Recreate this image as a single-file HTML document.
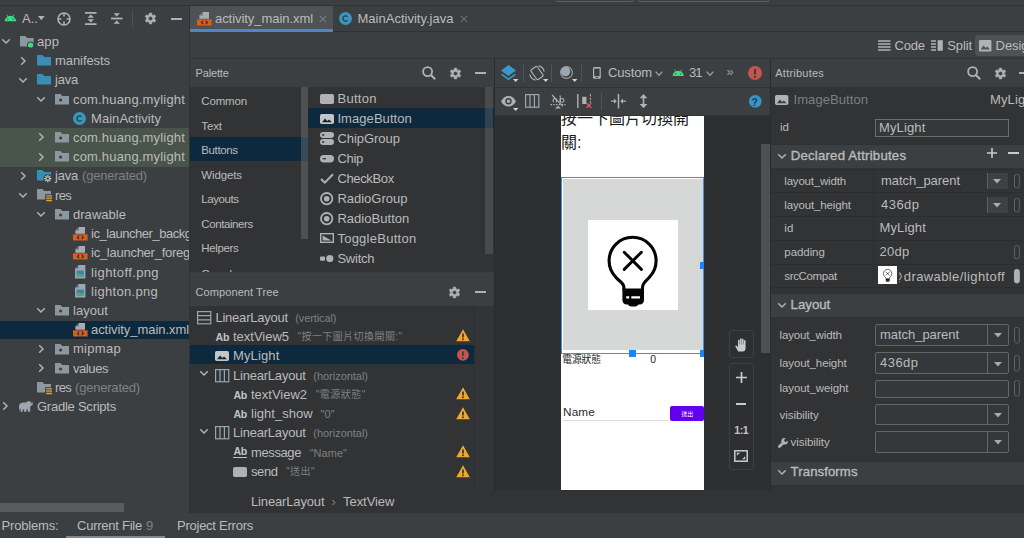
<!DOCTYPE html>
<html><head><meta charset="utf-8"><title>Android Studio</title><style>
html,body{margin:0;padding:0;}
body{width:1024px;height:538px;overflow:hidden;background:#3c3f41;position:relative;font-family:"Liberation Sans", "Noto Sans CJK TC", sans-serif;}
.b{position:absolute;}
.t{position:absolute;white-space:pre;line-height:20px;height:20px;}
svg{position:absolute;overflow:visible;}
</style></head>
<body>
<div class="b" style="left:0px;top:0px;width:1024px;height:5px;background:#3c3f41;"></div>
<div class="b" style="left:556px;top:0px;width:77px;height:2px;background:transparent;border:1px solid #5e6163;border-top:none;border-radius:0 0 3px 3px;box-sizing:border-box;"></div>
<div class="b" style="left:638px;top:0px;width:131px;height:2px;background:transparent;border:1px solid #5e6163;border-top:none;border-radius:0 0 3px 3px;box-sizing:border-box;"></div>
<div class="b" style="left:0px;top:5px;width:1024px;height:1px;background:#323232;"></div>
<div class="b" style="left:0px;top:6px;width:189px;height:507px;background:#3c3f41;"></div>
<div class="b" style="left:189px;top:6px;width:1px;height:507px;background:#323232;"></div>
<span class="t" style="left:22px;top:8.5px;font-size:13px;color:#bbbbbb;letter-spacing:0.031px;">A..</span>
<div class="b" style="left:0px;top:127.8px;width:189px;height:39.0px;background:#49544a;"></div>
<div class="b" style="left:0px;top:321px;width:189px;height:18.4px;background:#0d293e;"></div>
<span class="t" style="left:37px;top:31.91px;font-size:13px;color:#bbbbbb;letter-spacing:0.099px;">app</span>
<span class="t" style="left:55px;top:51.13px;font-size:13px;color:#bbbbbb;letter-spacing:-0.071px;">manifests</span>
<span class="t" style="left:55px;top:70.35px;font-size:13px;color:#bbbbbb;letter-spacing:-0.215px;">java</span>
<span class="t" style="left:73px;top:89.57px;font-size:13px;color:#bbbbbb;letter-spacing:0.169px;">com.huang.mylight</span>
<span class="t" style="left:91px;top:108.79px;font-size:13px;color:#bbbbbb;letter-spacing:0.053px;">MainActivity</span>
<span class="t" style="left:73px;top:128.01px;font-size:13px;color:#bbbbbb;letter-spacing:0.169px;">com.huang.mylight</span>
<span class="t" style="left:73px;top:147.23px;font-size:13px;color:#bbbbbb;letter-spacing:0.169px;">com.huang.mylight</span>
<span class="t" style="left:55px;top:166.45px;font-size:13px;color:#bbbbbb;letter-spacing:-0.215px;">java</span>
<span class="t" style="left:55px;top:185.67px;font-size:13px;color:#bbbbbb;letter-spacing:-0.688px;">res</span>
<span class="t" style="left:73px;top:204.89px;font-size:13px;color:#bbbbbb;letter-spacing:0.029px;">drawable</span>
<span class="t" style="left:91px;top:224.11px;font-size:13px;color:#bbbbbb;letter-spacing:-0.465px;width:98px;overflow:hidden;">ic_launcher_background.xml</span>
<span class="t" style="left:91px;top:243.33px;font-size:13px;color:#bbbbbb;letter-spacing:-0.256px;width:98px;overflow:hidden;">ic_launcher_foreground.xml</span>
<span class="t" style="left:91px;top:262.55px;font-size:13px;color:#bbbbbb;letter-spacing:0.385px;">lightoff.png</span>
<span class="t" style="left:91px;top:281.77px;font-size:13px;color:#bbbbbb;letter-spacing:0.307px;">lighton.png</span>
<span class="t" style="left:73px;top:300.99px;font-size:13px;color:#bbbbbb;letter-spacing:0.049px;">layout</span>
<span class="t" style="left:91px;top:320.21px;font-size:13px;color:#bbbbbb;letter-spacing:-0.057px;">activity_main.xml</span>
<span class="t" style="left:73px;top:339.43px;font-size:13px;color:#bbbbbb;letter-spacing:0.292px;">mipmap</span>
<span class="t" style="left:73px;top:358.65px;font-size:13px;color:#bbbbbb;letter-spacing:-0.43px;">values</span>
<span class="t" style="left:55px;top:377.87px;font-size:13px;color:#bbbbbb;letter-spacing:-0.688px;">res</span>
<span class="t" style="left:37px;top:397.09px;font-size:13px;color:#bbbbbb;letter-spacing:-0.241px;">Gradle Scripts</span>
<span class="t" style="left:82px;top:166.45px;font-size:13px;color:#7f8183;letter-spacing:-0.202px;">(generated)</span>
<span class="t" style="left:75px;top:377.87px;font-size:13px;color:#7f8183;letter-spacing:-0.202px;">(generated)</span>
<div class="b" style="left:0px;top:503.3px;width:124.4px;height:8.5px;background:#595b5d;"></div>
<div class="b" style="left:190px;top:6px;width:834px;height:25px;background:#3c3f41;"></div>
<div class="b" style="left:190px;top:6px;width:143px;height:25.7px;background:#4e5254;"></div>
<span class="t" style="left:215px;top:9.3px;font-size:13px;color:#bbbbbb;letter-spacing:-0.057px;">activity_main.xml</span>
<span class="t" style="left:357.5px;top:9.3px;font-size:13px;color:#bbbbbb;letter-spacing:0.009px;">MainActivity.java</span>
<div class="b" style="left:190px;top:30.9px;width:834px;height:1.1px;background:#2f3133;"></div>
<div class="b" style="left:190px;top:28.7px;width:143px;height:3.3px;background:#4a88c7;"></div>
<div class="b" style="left:190px;top:32px;width:834px;height:26px;background:#3c3f41;"></div>
<div class="b" style="left:975px;top:35px;width:60px;height:21px;background:#4e5254;border-radius:4px;"></div>
<span class="t" style="left:894.6px;top:35.9px;font-size:13px;color:#bbbbbb;letter-spacing:-0.27px;">Code</span>
<span class="t" style="left:947.3px;top:35.9px;font-size:13px;color:#bbbbbb;letter-spacing:-0.139px;">Split</span>
<span class="t" style="left:995.6px;top:35.9px;font-size:13px;color:#bbbbbb;letter-spacing:-0.078px;">Design</span>
<div class="b" style="left:190px;top:58px;width:834px;height:1px;background:#323232;"></div>
<div class="b" style="left:190px;top:59px;width:304px;height:28px;background:#3c3f41;"></div>
<span class="t" style="left:195.6px;top:63.0px;font-size:11px;color:#bbbbbb;letter-spacing:-0.179px;">Palette</span>
<div class="b" style="left:190px;top:87px;width:118px;height:184.8px;background:#313335;"></div>
<div class="b" style="left:308px;top:87px;width:186px;height:184.8px;background:#313335;"></div>
<div class="b" style="left:190px;top:136.5px;width:118px;height:24.5px;background:#0d293e;"></div>
<div class="b" style="left:308px;top:108.2px;width:186px;height:20px;background:#0d293e;"></div>
<span class="t" style="left:201.3px;top:91.0px;font-size:11.5px;color:#bbbbbb;letter-spacing:-0.159px;">Common</span>
<span class="t" style="left:201.3px;top:115.55px;font-size:11.5px;color:#bbbbbb;letter-spacing:-0.123px;">Text</span>
<span class="t" style="left:201.3px;top:140.1px;font-size:11.5px;color:#bbbbbb;letter-spacing:-0.371px;">Buttons</span>
<span class="t" style="left:201.3px;top:164.65px;font-size:11.5px;color:#bbbbbb;letter-spacing:-0.121px;">Widgets</span>
<span class="t" style="left:201.3px;top:189.2px;font-size:11.5px;color:#bbbbbb;letter-spacing:-0.412px;">Layouts</span>
<span class="t" style="left:201.3px;top:213.75px;font-size:11.5px;color:#bbbbbb;letter-spacing:-0.412px;">Containers</span>
<span class="t" style="left:201.3px;top:238.3px;font-size:11.5px;color:#bbbbbb;letter-spacing:-0.377px;">Helpers</span>
<div class="b" style="left:190px;top:262px;width:111px;height:10px;overflow:hidden;"><span class="t" style="left:11.3px;top:1.6px;font-size:11.5px;color:#bbbbbb;">Google</span></div>
<span class="t" style="left:337.4px;top:88.5px;font-size:13px;color:#bbbbbb;letter-spacing:0.318px;">Button</span>
<span class="t" style="left:337.4px;top:108.53px;font-size:13px;color:#bbbbbb;letter-spacing:0.071px;">ImageButton</span>
<span class="t" style="left:337.4px;top:128.56px;font-size:13px;color:#bbbbbb;letter-spacing:-0.042px;">ChipGroup</span>
<span class="t" style="left:337.4px;top:148.59px;font-size:13px;color:#bbbbbb;letter-spacing:-0.312px;">Chip</span>
<span class="t" style="left:337.4px;top:168.62px;font-size:13px;color:#bbbbbb;letter-spacing:-0.344px;">CheckBox</span>
<span class="t" style="left:337.4px;top:188.65px;font-size:13px;color:#bbbbbb;letter-spacing:-0.011px;">RadioGroup</span>
<span class="t" style="left:337.4px;top:208.68px;font-size:13px;color:#bbbbbb;letter-spacing:0.04px;">RadioButton</span>
<span class="t" style="left:337.4px;top:228.71px;font-size:13px;color:#bbbbbb;letter-spacing:0.258px;">ToggleButton</span>
<span class="t" style="left:337.4px;top:248.74px;font-size:13px;color:#bbbbbb;letter-spacing:-0.216px;">Switch</span>
<div class="b" style="left:301px;top:87px;width:7px;height:151.5px;background:rgba(128,130,132,0.38);"></div>
<div class="b" style="left:485px;top:87px;width:8px;height:167px;background:rgba(128,130,132,0.30);"></div>
<div class="b" style="left:493.5px;top:59px;width:1px;height:454px;background:#2b2b2b;"></div>
<div class="b" style="left:190px;top:271.8px;width:304px;height:34.4px;background:#3c3f41;"></div>
<div class="b" style="left:190px;top:277.2px;width:304px;height:1px;background:#383b3d;"></div>
<span class="t" style="left:195.6px;top:282.3px;font-size:11px;color:#bbbbbb;letter-spacing:0.076px;">Component Tree</span>
<div class="b" style="left:190px;top:306px;width:284px;height:184.5px;background:#313335;"></div>
<div class="b" style="left:474px;top:306px;width:19.5px;height:184.5px;background:#323437;"></div>
<div class="b" style="left:474px;top:306px;width:1px;height:184.5px;background:#2c2e30;"></div>
<div class="b" style="left:190px;top:345.4px;width:284px;height:18.6px;background:#0d293e;"></div>
<span class="t" style="left:215.4px;top:307.6px;font-size:13px;color:#bbbbbb;letter-spacing:-0.214px;">LinearLayout</span>
<span class="t" style="left:295.3px;top:307.6px;font-size:11px;color:#7f8183;letter-spacing:-0.117px;">(vertical)</span>
<span class="t" style="left:233px;top:326.9px;font-size:13px;color:#bbbbbb;letter-spacing:-0.016px;">textView5</span>
<span class="t" style="left:297.5px;top:327.2px;font-size:10px;color:#7f8183;letter-spacing:0.426px;">&quot;按一下圖片切換開關:&quot;</span>
<span class="t" style="left:233px;top:346.2px;font-size:13px;color:#bbbbbb;letter-spacing:0.138px;">MyLight</span>
<span class="t" style="left:233px;top:365.5px;font-size:13px;color:#bbbbbb;letter-spacing:-0.214px;">LinearLayout</span>
<span class="t" style="left:313.3px;top:365.5px;font-size:11px;color:#7f8183;letter-spacing:-0.028px;">(horizontal)</span>
<span class="t" style="left:251px;top:384.8px;font-size:13px;color:#bbbbbb;letter-spacing:-0.016px;">textView2</span>
<span class="t" style="left:315.8px;top:385.1px;font-size:10px;color:#7f8183;letter-spacing:0.482px;">&quot;電源狀態&quot;</span>
<span class="t" style="left:251px;top:404.1px;font-size:13px;color:#bbbbbb;letter-spacing:0.026px;">light_show</span>
<span class="t" style="left:320.5px;top:404.1px;font-size:11px;color:#7f8183;letter-spacing:0.121px;">&quot;0&quot;</span>
<span class="t" style="left:233px;top:423.4px;font-size:13px;color:#bbbbbb;letter-spacing:-0.214px;">LinearLayout</span>
<span class="t" style="left:313.3px;top:423.4px;font-size:11px;color:#7f8183;letter-spacing:-0.028px;">(horizontal)</span>
<span class="t" style="left:251px;top:442.7px;font-size:13px;color:#bbbbbb;letter-spacing:-0.393px;">message</span>
<span class="t" style="left:309.7px;top:442.7px;font-size:11px;color:#7f8183;letter-spacing:0.024px;">&quot;Name&quot;</span>
<span class="t" style="left:251px;top:462.0px;font-size:13px;color:#bbbbbb;letter-spacing:-0.426px;">send</span>
<span class="t" style="left:286px;top:462.3px;font-size:10px;color:#7f8183;letter-spacing:0.473px;">&quot;送出&quot;</span>
<div class="b" style="left:190px;top:490.5px;width:834px;height:22.5px;background:#313335;"></div>
<span class="t" style="left:251px;top:492.0px;font-size:13px;color:#bbbbbb;letter-spacing:-0.148px;">LinearLayout</span>
<span class="t" style="left:331.5px;top:491.5px;font-size:13px;color:#7f8183;">›</span>
<span class="t" style="left:343px;top:492.0px;font-size:13px;color:#bbbbbb;letter-spacing:-0.05px;">TextView</span>
<div class="b" style="left:494.5px;top:59px;width:275.5px;height:28px;background:#3c3f41;"></div>
<div class="b" style="left:494.5px;top:87px;width:275.5px;height:1px;background:#323232;"></div>
<div class="b" style="left:494.5px;top:88px;width:275.5px;height:27px;background:#3c3f41;"></div>
<div class="b" style="left:494.5px;top:115px;width:275.5px;height:1px;background:#323232;"></div>
<span class="t" style="left:608px;top:63.0px;font-size:13px;color:#bbbbbb;letter-spacing:-0.133px;">Custom</span>
<span class="t" style="left:689px;top:63.0px;font-size:13px;color:#bbbbbb;letter-spacing:-0.884px;">31</span>
<span class="t" style="left:726.5px;top:62.0px;font-size:13px;color:#9a9da0;">»</span>
<div class="b" style="left:522.5px;top:64px;width:1px;height:18px;background:#505355;"></div>
<div class="b" style="left:580.5px;top:64px;width:1px;height:18px;background:#505355;"></div>
<div class="b" style="left:600.5px;top:92px;width:1px;height:18px;background:#505355;"></div>
<div class="b" style="left:494.5px;top:116px;width:275.5px;height:374.5px;background:#2d2f31;"></div>
<div class="b" style="left:561px;top:116px;width:143px;height:374px;background:#ffffff;"></div>
<div class="b" style="left:561px;top:116px;width:143px;height:60px;overflow:hidden;"><span class="t" style="left:0px;top:-9.5px;font-size:16px;line-height:24.7px;height:auto;color:#1a1a1a;white-space:normal;width:130px;word-break:break-all;">按一下圖片切換開關:</span></div>
<div class="b" style="left:561px;top:177.2px;width:143.2px;height:176.8px;background:#ffffff;box-sizing:border-box;border:1px solid #3f8fe8;"></div>
<div class="b" style="left:562.8px;top:179.2px;width:139.9px;height:170.4px;background:#d6d7d7;"></div>
<div class="b" style="left:588px;top:220px;width:90px;height:90px;background:#ffffff;"></div>
<span class="t" style="left:562.2px;top:350.4px;font-size:9.8px;color:#222;letter-spacing:-0.097px;">電源狀態</span>
<span class="t" style="left:650.3px;top:350.2px;font-size:10.4px;color:#222;">0</span>
<span class="t" style="left:563px;top:401.6px;font-size:11.8px;color:#2a2a2a;letter-spacing:0.133px;">Name</span>
<div class="b" style="left:563px;top:420px;width:105px;height:1px;background:#dcdcdc;"></div>
<div class="b" style="left:669.9px;top:406.3px;width:34.1px;height:14.8px;background:#6200ee;border-radius:2px;"></div>
<span class="t" style="left:681.4px;top:404.0px;font-size:5.8px;color:#ffffff;letter-spacing:0.195px;">送出</span>
<div class="b" style="left:699.8px;top:262px;width:4.4px;height:7px;background:#1886f7;"></div>
<div class="b" style="left:629px;top:350.2px;width:7.3px;height:7.2px;background:#1886f7;"></div>
<div class="b" style="left:700.3px;top:350.2px;width:3.9px;height:7.2px;background:#1886f7;"></div>
<div class="b" style="left:761px;top:143.5px;width:8.5px;height:209.5px;background:rgba(128,130,132,0.40);"></div>
<div class="b" style="left:728.9px;top:330.3px;width:24.8px;height:28px;background:#2d2f31;box-sizing:border-box;border:1px solid #3e4042;border-radius:3px;"></div>
<div class="b" style="left:728.9px;top:363.4px;width:24.8px;height:106.3px;background:#2d2f31;box-sizing:border-box;border:1px solid #3e4042;border-radius:3px;"></div>
<span class="t" style="left:734.2px;top:420.0px;font-size:10.5px;color:#c4c4c4;letter-spacing:-0.396px;font-weight:bold;">1:1</span>
<div class="b" style="left:770px;top:59px;width:1px;height:431.5px;background:#2b2b2b;"></div>
<div class="b" style="left:771px;top:59px;width:253px;height:28px;background:#3c3f41;"></div>
<span class="t" style="left:775.3px;top:63.0px;font-size:11px;color:#bbbbbb;letter-spacing:0.223px;">Attributes</span>
<div class="b" style="left:771px;top:87px;width:253px;height:27.5px;background:#313335;"></div>
<span class="t" style="left:793.5px;top:90.4px;font-size:13px;color:#7d8082;letter-spacing:0.071px;">ImageButton</span>
<span class="t" style="left:990px;top:90.4px;font-size:13px;color:#bbbbbb;letter-spacing:0.138px;">MyLight</span>
<div class="b" style="left:771px;top:114.5px;width:253px;height:29px;background:#313335;"></div>
<span class="t" style="left:780px;top:117.4px;font-size:11.5px;color:#bbbbbb;letter-spacing:-0.077px;">id</span>
<div class="b" style="left:875px;top:118.5px;width:134px;height:18.5px;background:#35383a;box-sizing:border-box;border:1px solid #6b6d6f;"></div>
<span class="t" style="left:879px;top:117.6px;font-size:13px;color:#bbbbbb;letter-spacing:0.138px;">MyLight</span>
<div class="b" style="left:771px;top:143.5px;width:253px;height:1px;background:#2f3133;"></div>
<div class="b" style="left:771px;top:144.5px;width:253px;height:23.5px;background:#3c3f41;"></div>
<span class="t" style="left:790.7px;top:146.2px;font-size:13.2px;color:#bbbbbb;letter-spacing:0.215px;-webkit-text-stroke:0.35px #bbbbbb;">Declared Attributes</span>
<div class="b" style="left:771px;top:168px;width:253px;height:120.5px;background:#313335;"></div>
<div class="b" style="left:771px;top:168.6px;width:253px;height:1px;background:#2b2d2f;"></div>
<div class="b" style="left:771px;top:192.3px;width:253px;height:1px;background:#2b2d2f;"></div>
<div class="b" style="left:771px;top:216.1px;width:253px;height:1px;background:#2b2d2f;"></div>
<div class="b" style="left:771px;top:239.8px;width:253px;height:1px;background:#2b2d2f;"></div>
<div class="b" style="left:771px;top:263.6px;width:253px;height:1px;background:#2b2d2f;"></div>
<div class="b" style="left:771px;top:287.4px;width:253px;height:1px;background:#2b2d2f;"></div>
<div class="b" style="left:873px;top:169px;width:1px;height:119px;background:#2b2d2f;"></div>
<span class="t" style="left:784.3px;top:170.6px;font-size:11.5px;color:#bbbbbb;letter-spacing:-0.195px;">layout_width</span>
<span class="t" style="left:881px;top:170.6px;font-size:13px;color:#bbbbbb;letter-spacing:-0.042px;">match_parent</span>
<span class="t" style="left:784.3px;top:194.5px;font-size:11.5px;color:#bbbbbb;letter-spacing:-0.156px;">layout_height</span>
<span class="t" style="left:881px;top:194.5px;font-size:13px;color:#bbbbbb;letter-spacing:0.469px;">436dp</span>
<span class="t" style="left:784.3px;top:218.4px;font-size:11.5px;color:#bbbbbb;letter-spacing:0.273px;">id</span>
<span class="t" style="left:879.5px;top:218.4px;font-size:13px;color:#bbbbbb;letter-spacing:0.138px;">MyLight</span>
<span class="t" style="left:784.3px;top:242.3px;font-size:11.5px;color:#bbbbbb;letter-spacing:-0.062px;">padding</span>
<span class="t" style="left:879.5px;top:242.3px;font-size:13px;color:#bbbbbb;letter-spacing:0.27px;">20dp</span>
<span class="t" style="left:784.3px;top:266.2px;font-size:11.5px;color:#bbbbbb;letter-spacing:-0.345px;">srcCompat</span>
<div class="b" style="left:878.4px;top:266.2px;width:18.2px;height:17.8px;background:#ffffff;"></div>
<div class="b" style="left:898.5px;top:266px;width:6px;height:21px;overflow:hidden;"><span class="t" style="left:-9px;top:0.6px;font-size:13px;color:#bbbbbb;">@</span></div>
<span class="t" style="left:903.8px;top:266.5px;font-size:13px;color:#bbbbbb;letter-spacing:0.398px;">drawable/lightoff</span>
<div class="b" style="left:771px;top:288.5px;width:253px;height:6px;background:#313335;"></div>
<div class="b" style="left:771px;top:294px;width:253px;height:22.5px;background:#3c3f41;"></div>
<span class="t" style="left:790.6px;top:294.5px;font-size:13.2px;color:#bbbbbb;letter-spacing:0.015px;-webkit-text-stroke:0.35px #bbbbbb;">Layout</span>
<div class="b" style="left:771px;top:316.5px;width:253px;height:145.5px;background:#313335;"></div>
<span class="t" style="left:779.6px;top:325.2px;font-size:11.5px;color:#bbbbbb;letter-spacing:-0.153px;">layout_width</span>
<span class="t" style="left:779.6px;top:353.0px;font-size:11.5px;color:#bbbbbb;letter-spacing:-0.117px;">layout_height</span>
<span class="t" style="left:779.6px;top:378.3px;font-size:11.5px;color:#bbbbbb;letter-spacing:-0.118px;">layout_weight</span>
<span class="t" style="left:779.6px;top:404.9px;font-size:11.5px;color:#bbbbbb;letter-spacing:-0.062px;">visibility</span>
<span class="t" style="left:790.6px;top:432.2px;font-size:11.5px;color:#bbbbbb;letter-spacing:-0.062px;">visibility</span>
<div class="b" style="left:875.3px;top:324.3px;width:133.4px;height:21.5px;background:#35383a;box-sizing:border-box;border:1px solid #646668;border-radius:2px;"></div>
<div class="b" style="left:986.5px;top:325.3px;width:1px;height:19.5px;background:#646668;"></div>
<div class="b" style="left:875.3px;top:352.4px;width:133.4px;height:21.5px;background:#35383a;box-sizing:border-box;border:1px solid #646668;border-radius:2px;"></div>
<div class="b" style="left:986.5px;top:353.4px;width:1px;height:19.5px;background:#646668;"></div>
<div class="b" style="left:875.3px;top:379.8px;width:133.4px;height:18.2px;background:#35383a;box-sizing:border-box;border:1px solid #646668;border-radius:2px;"></div>
<div class="b" style="left:875.3px;top:403.5px;width:133.4px;height:21.3px;background:#35383a;box-sizing:border-box;border:1px solid #646668;border-radius:2px;"></div>
<div class="b" style="left:986.5px;top:404.5px;width:1px;height:19.3px;background:#646668;"></div>
<div class="b" style="left:875.3px;top:431.3px;width:133.4px;height:21.5px;background:#35383a;box-sizing:border-box;border:1px solid #646668;border-radius:2px;"></div>
<div class="b" style="left:986.5px;top:432.3px;width:1px;height:19.5px;background:#646668;"></div>
<span class="t" style="left:880px;top:325.2px;font-size:13px;color:#bbbbbb;letter-spacing:-0.042px;">match_parent</span>
<span class="t" style="left:880px;top:353.0px;font-size:13px;color:#bbbbbb;letter-spacing:0.469px;">436dp</span>
<div class="b" style="left:771px;top:462px;width:253px;height:22.5px;background:#3c3f41;"></div>
<span class="t" style="left:790.6px;top:462.0px;font-size:13.2px;color:#bbbbbb;letter-spacing:0.08px;-webkit-text-stroke:0.35px #bbbbbb;">Transforms</span>
<div class="b" style="left:771px;top:484.5px;width:253px;height:6px;background:#313335;"></div>
<div class="b" style="left:0px;top:513px;width:1024px;height:25px;background:#3c3f41;"></div>
<span class="t" style="left:1.5px;top:516.0px;font-size:13px;color:#bbbbbb;letter-spacing:-0.17px;">Problems:</span>
<span class="t" style="left:77px;top:516.0px;font-size:13px;color:#bbbbbb;letter-spacing:-0.243px;">Current File</span>
<span class="t" style="left:146px;top:516.0px;font-size:13px;color:#7f8183;letter-spacing:-0.734px;">9</span>
<span class="t" style="left:177px;top:516.0px;font-size:13px;color:#bbbbbb;letter-spacing:-0.248px;">Project Errors</span>
<div class="b" style="left:65.5px;top:536.3px;width:99.5px;height:1.7px;background:#84878a;"></div>
<svg style="left:4.4px;top:14.100000000000001px" width="12.8" height="7.466666666666668" viewBox="0 4.5 24 14"><path d="M17.6,9.48 l1.84,-3.18 c0.16,-0.31 0.04,-0.69 -0.26,-0.85 c-0.29,-0.15 -0.65,-0.06 -0.83,0.22 l-1.88,3.24 a11.46,11.46 0 0 0 -8.94,0 L5.65,5.67 c-0.19,-0.29 -0.58,-0.38 -0.87,-0.2 c-0.28,0.18 -0.37,0.54 -0.22,0.83 L6.4,9.48 A10.78,10.78 0 0 0 1,18 h22 A10.78,10.78 0 0 0 17.6,9.48 Z M7,15.25 a1.25,1.25 0 1 1 0,-2.5 a1.25,1.25 0 0 1 0,2.5 Z m10,0 a1.25,1.25 0 1 1 0,-2.5 a1.25,1.25 0 0 1 0,2.5 Z" fill="#3ddc84"/></svg>
<svg style="left:38px;top:16.2px" width="7" height="5" viewBox="0 0 7 5"><path d="M0,0 H6.6 L3.3,4.2 Z" fill="#afb1b3"/></svg>
<svg style="left:57px;top:11.9px" width="14" height="14" viewBox="0 0 14 14"><circle cx="7" cy="7" r="6" fill="none" stroke="#afb1b3" stroke-width="1.6"/><path d="M7,1 V4.4 M7,9.6 V13 M1,7 H4.4 M9.6,7 H13" stroke="#afb1b3" stroke-width="1.6"/></svg>
<svg style="left:84.5px;top:12px" width="11.5" height="13" viewBox="0 0 11.5 13"><path d="M0,0.8 H11.5 M0,12.2 H11.5" stroke="#afb1b3" stroke-width="1.8"/><path d="M5.75,2.6 L8.9,5.7 H2.6 Z M5.75,10.4 L8.9,7.3 H2.6 Z" fill="#afb1b3"/></svg>
<svg style="left:111px;top:12px" width="11.5" height="13" viewBox="0 0 11.5 13"><path d="M0,6.5 H11.5" stroke="#afb1b3" stroke-width="1.8"/><path d="M5.75,4.6 L8.9,1.2 H2.6 Z M5.75,8.4 L8.9,11.8 H2.6 Z" fill="#afb1b3"/></svg>
<div class="b" style="left:132px;top:10.5px;width:1px;height:16px;background:#515456;"></div>
<svg style="left:143.8px;top:12.0px" width="13" height="13" viewBox="0 0 14.8 14.8"><path d="M5.90,2.95 L6.00,1.15 L8.80,1.15 L8.90,2.95 L10.51,3.87 L12.11,3.07 L13.51,5.49 L12.01,6.47 L12.01,8.33 L13.51,9.31 L12.11,11.73 L10.51,10.93 L8.90,11.85 L8.80,13.65 L6.00,13.65 L5.90,11.85 L4.29,10.93 L2.69,11.73 L1.29,9.31 L2.79,8.33 L2.79,6.47 L1.29,5.49 L2.69,3.07 L4.29,3.87 Z M5.05,7.4 a2.35,2.35 0 1 0 4.7,0 a2.35,2.35 0 1 0 -4.7,0 Z" fill="#afb1b3" fill-rule="evenodd" stroke="#afb1b3" stroke-width="0.5" stroke-linejoin="round"/></svg>
<div class="b" style="left:170.7px;top:17.5px;width:11.100000000000023px;height:2px;background:#afb1b3;"></div>
<svg style="left:0.5999999999999996px;top:36.31px" width="10" height="10" viewBox="0 0 10 10"><path d="M1.2,3.2 L5,7 L8.8,3.2" fill="none" stroke="#afb1b3" stroke-width="1.5"/></svg>
<svg style="left:19.5px;top:36.21px" width="15" height="12" viewBox="0 0 15 12"><path d="M0,0 H5.4 L7.2,2 H13.6 V10.6 H0 Z" fill="#8c979f"/><circle cx="10.6" cy="9" r="3.6" fill="#3c3f41"/><circle cx="10.6" cy="9" r="2.6" fill="#3ddc84"/></svg>
<svg style="left:17.5px;top:55.53px" width="10" height="10" viewBox="0 0 10 10"><path d="M3.2,1.2 L7,5 L3.2,8.8" fill="none" stroke="#afb1b3" stroke-width="1.5"/></svg>
<svg style="left:36.7px;top:55.230000000000004px" width="14" height="11" viewBox="0 0 14 11"><path d="M0,0 H5.4 L7.2,2 H14 V10.6 H0 Z" fill="#3a8eb6"/></svg>
<svg style="left:18px;top:74.75px" width="10" height="10" viewBox="0 0 10 10"><path d="M1.2,3.2 L5,7 L8.8,3.2" fill="none" stroke="#afb1b3" stroke-width="1.5"/></svg>
<svg style="left:36.7px;top:74.45px" width="14" height="11" viewBox="0 0 14 11"><path d="M0,0 H5.4 L7.2,2 H14 V10.6 H0 Z" fill="#3a8eb6"/></svg>
<svg style="left:36px;top:93.97px" width="10" height="10" viewBox="0 0 10 10"><path d="M1.2,3.2 L5,7 L8.8,3.2" fill="none" stroke="#afb1b3" stroke-width="1.5"/></svg>
<svg style="left:54.8px;top:93.67px" width="14" height="11" viewBox="0 0 14 11"><path d="M0,0 H5.4 L7.2,2 H14 V10.6 H0 Z" fill="#8c979f"/><circle cx="5.6" cy="6" r="1.6" fill="#3c3f41"/></svg>
<svg style="left:73.1px;top:111.99px" width="13" height="13" viewBox="0 0 13 13"><circle cx="6.5" cy="6.5" r="6.5" fill="#3a96bd"/><path d="M8.6,4.6 A2.7,2.7 0 1 0 8.6,8.4" fill="none" stroke="#2a3b44" stroke-width="1.3"/></svg>
<svg style="left:35.5px;top:132.40999999999997px" width="10" height="10" viewBox="0 0 10 10"><path d="M3.2,1.2 L7,5 L3.2,8.8" fill="none" stroke="#afb1b3" stroke-width="1.5"/></svg>
<svg style="left:54.8px;top:132.10999999999996px" width="14" height="11" viewBox="0 0 14 11"><path d="M0,0 H5.4 L7.2,2 H14 V10.6 H0 Z" fill="#8c979f"/><circle cx="5.6" cy="6" r="1.6" fill="#3c3f41"/></svg>
<svg style="left:35.5px;top:151.63px" width="10" height="10" viewBox="0 0 10 10"><path d="M3.2,1.2 L7,5 L3.2,8.8" fill="none" stroke="#afb1b3" stroke-width="1.5"/></svg>
<svg style="left:54.8px;top:151.32999999999998px" width="14" height="11" viewBox="0 0 14 11"><path d="M0,0 H5.4 L7.2,2 H14 V10.6 H0 Z" fill="#8c979f"/><circle cx="5.6" cy="6" r="1.6" fill="#3c3f41"/></svg>
<svg style="left:17.5px;top:170.84999999999997px" width="10" height="10" viewBox="0 0 10 10"><path d="M3.2,1.2 L7,5 L3.2,8.8" fill="none" stroke="#afb1b3" stroke-width="1.5"/></svg>
<svg style="left:36.7px;top:170.34999999999997px" width="16" height="14" viewBox="0 0 16 14"><path d="M0,0 H5.4 L7.2,2 H14 V10.6 H0 Z" fill="#3a8eb6"/><circle cx="10.8" cy="8.6" r="4.4" fill="#3c3f41"/><g stroke="#c3c7ca" stroke-width="1.3"><path d="M10.8,5 V12.2 M7.2,8.6 H14.4 M8.3,6.1 L13.3,11.1 M13.3,6.1 L8.3,11.1"/></g><circle cx="10.8" cy="8.6" r="1.2" fill="#3c3f41"/></svg>
<svg style="left:18px;top:190.07px" width="10" height="10" viewBox="0 0 10 10"><path d="M1.2,3.2 L5,7 L8.8,3.2" fill="none" stroke="#afb1b3" stroke-width="1.5"/></svg>
<svg style="left:36.7px;top:189.47px" width="16" height="14" viewBox="0 0 16 14"><path d="M0,0 H5.4 L7.2,2 H14 V10.6 H0 Z" fill="#8c979f"/><rect x="8.2" y="5.2" width="7.4" height="8.6" fill="#3c3f41"/><path d="M9.2,6.9 H15 M9.2,9.2 H15 M9.2,11.5 H15" stroke="#e0a33c" stroke-width="1.3"/></svg>
<svg style="left:36px;top:209.28999999999996px" width="10" height="10" viewBox="0 0 10 10"><path d="M1.2,3.2 L5,7 L8.8,3.2" fill="none" stroke="#afb1b3" stroke-width="1.5"/></svg>
<svg style="left:54.8px;top:208.98999999999995px" width="14" height="11" viewBox="0 0 14 11"><path d="M0,0 H5.4 L7.2,2 H14 V10.6 H0 Z" fill="#8c979f"/><circle cx="5.6" cy="6" r="1.6" fill="#3c3f41"/></svg>
<svg style="left:72.9px;top:226.81px" width="15" height="14" viewBox="0 0 15 14"><path d="M2.4,6.8 V3.4 L5.8,0 H12 V6.8 Z" fill="#a4adb3"/><path d="M2.4,3.4 L5.8,0 V3.4 Z" fill="#3c3f41" opacity="0.5"/><rect x="0" y="7.3" width="14.6" height="6.2" fill="#d35f21"/><path d="M6.2,8.6 L4.4,10.4 L6.2,12.2 M8.6,8.6 L10.4,10.4 L8.6,12.2" fill="none" stroke="#3a2618" stroke-width="1.1"/></svg>
<svg style="left:72.9px;top:246.02999999999997px" width="15" height="14" viewBox="0 0 15 14"><path d="M2.4,6.8 V3.4 L5.8,0 H12 V6.8 Z" fill="#a4adb3"/><path d="M2.4,3.4 L5.8,0 V3.4 Z" fill="#3c3f41" opacity="0.5"/><rect x="0" y="7.3" width="14.6" height="6.2" fill="#d35f21"/><path d="M6.2,8.6 L4.4,10.4 L6.2,12.2 M8.6,8.6 L10.4,10.4 L8.6,12.2" fill="none" stroke="#3a2618" stroke-width="1.1"/></svg>
<svg style="left:75.2px;top:265.25px" width="11" height="14" viewBox="0 0 11 14"><path d="M0,3.4 L3.4,0 H10.4 V13.6 H0 Z" fill="#9aa7b0"/><path d="M0,3.4 L3.4,0 V3.4 Z" fill="#3c3f41" opacity="0.6"/><rect x="1.6" y="5.6" width="7.2" height="6" fill="#3f7fb0"/><path d="M1.6,11.6 V9.6 L3.6,8 L5.6,9.8 L7,8.8 L8.8,10.2 V11.6 Z" fill="#59a869"/></svg>
<svg style="left:75.2px;top:284.47px" width="11" height="14" viewBox="0 0 11 14"><path d="M0,3.4 L3.4,0 H10.4 V13.6 H0 Z" fill="#9aa7b0"/><path d="M0,3.4 L3.4,0 V3.4 Z" fill="#3c3f41" opacity="0.6"/><rect x="1.6" y="5.6" width="7.2" height="6" fill="#3f7fb0"/><path d="M1.6,11.6 V9.6 L3.6,8 L5.6,9.8 L7,8.8 L8.8,10.2 V11.6 Z" fill="#59a869"/></svg>
<svg style="left:36px;top:305.39px" width="10" height="10" viewBox="0 0 10 10"><path d="M1.2,3.2 L5,7 L8.8,3.2" fill="none" stroke="#afb1b3" stroke-width="1.5"/></svg>
<svg style="left:54.8px;top:305.09px" width="14" height="11" viewBox="0 0 14 11"><path d="M0,0 H5.4 L7.2,2 H14 V10.6 H0 Z" fill="#8c979f"/><circle cx="5.6" cy="6" r="1.6" fill="#3c3f41"/></svg>
<svg style="left:72.9px;top:322.90999999999997px" width="15" height="14" viewBox="0 0 15 14"><path d="M2.4,6.8 V3.4 L5.8,0 H12 V6.8 Z" fill="#a4adb3"/><path d="M2.4,3.4 L5.8,0 V3.4 Z" fill="#3c3f41" opacity="0.5"/><rect x="0" y="7.3" width="14.6" height="6.2" fill="#d35f21"/><path d="M6.2,8.6 L4.4,10.4 L6.2,12.2 M8.6,8.6 L10.4,10.4 L8.6,12.2" fill="none" stroke="#3a2618" stroke-width="1.1"/></svg>
<svg style="left:35.5px;top:343.83px" width="10" height="10" viewBox="0 0 10 10"><path d="M3.2,1.2 L7,5 L3.2,8.8" fill="none" stroke="#afb1b3" stroke-width="1.5"/></svg>
<svg style="left:54.8px;top:343.53px" width="14" height="11" viewBox="0 0 14 11"><path d="M0,0 H5.4 L7.2,2 H14 V10.6 H0 Z" fill="#8c979f"/><circle cx="5.6" cy="6" r="1.6" fill="#3c3f41"/></svg>
<svg style="left:35.5px;top:363.05px" width="10" height="10" viewBox="0 0 10 10"><path d="M3.2,1.2 L7,5 L3.2,8.8" fill="none" stroke="#afb1b3" stroke-width="1.5"/></svg>
<svg style="left:54.8px;top:362.75px" width="14" height="11" viewBox="0 0 14 11"><path d="M0,0 H5.4 L7.2,2 H14 V10.6 H0 Z" fill="#8c979f"/><circle cx="5.6" cy="6" r="1.6" fill="#3c3f41"/></svg>
<svg style="left:37.4px;top:381.66999999999996px" width="16" height="14" viewBox="0 0 16 14"><path d="M0,0 H5.4 L7.2,2 H14 V10.6 H0 Z" fill="#8c979f"/><rect x="8.2" y="5.2" width="7.4" height="8.6" fill="#3c3f41"/><path d="M9.2,6.9 H15 M9.2,9.2 H15 M9.2,11.5 H15" stroke="#e0a33c" stroke-width="1.3"/></svg>
<svg style="left:-0.5px;top:401.48999999999995px" width="10" height="10" viewBox="0 0 10 10"><path d="M3.2,1.2 L7,5 L3.2,8.8" fill="none" stroke="#afb1b3" stroke-width="1.5"/></svg>
<svg style="left:18.4px;top:401.18999999999994px" width="15" height="11" viewBox="0 0 15 11"><path d="M1,10.8 V5.8 C1,3 3,1.6 5.6,1.6 H8.2 C9,0.5 10.4,0 11.6,0.2 C13.4,0.5 14,2 13.6,3.2 C14.4,2.8 14.9,1.8 14.6,0.6 L14.9,0.5 C15.5,2.4 14.8,4.2 13.2,4.8 C12.6,5 12.2,5.4 12.2,6.2 V10.8 H9.8 V8.4 H8.4 V10.8 H6 V8.4 H4.8 V10.8 H2.6 V8.6 C2.6,8 2.2,7.6 1.8,7.6 Z" fill="#9aa7b0"/></svg>
<svg style="left:197.3px;top:11.600000000000001px" width="15" height="14" viewBox="0 0 15 14"><path d="M2.4,6.8 V3.4 L5.8,0 H12 V6.8 Z" fill="#a4adb3"/><path d="M2.4,3.4 L5.8,0 V3.4 Z" fill="#3c3f41" opacity="0.5"/><rect x="0" y="7.3" width="14.6" height="6.2" fill="#d35f21"/><path d="M6.2,8.6 L4.4,10.4 L6.2,12.2 M8.6,8.6 L10.4,10.4 L8.6,12.2" fill="none" stroke="#3a2618" stroke-width="1.1"/></svg>
<svg style="left:319px;top:15px" width="8" height="8" viewBox="0 0 8 8"><path d="M0.8,0.8 L7.2,7.2 M7.2,0.8 L0.8,7.2" stroke="#7a7d7f" stroke-width="1.1"/></svg>
<svg style="left:339.1px;top:12.100000000000001px" width="13" height="13" viewBox="0 0 13 13"><circle cx="6.5" cy="6.5" r="6.5" fill="#3a96bd"/><path d="M8.6,4.6 A2.7,2.7 0 1 0 8.6,8.4" fill="none" stroke="#2a3b44" stroke-width="1.3"/></svg>
<svg style="left:460px;top:15px" width="8" height="8" viewBox="0 0 8 8"><path d="M0.8,0.8 L7.2,7.2 M7.2,0.8 L0.8,7.2" stroke="#6e7173" stroke-width="1.1"/></svg>
<svg style="left:877.6px;top:39.5px" width="12.5" height="11" viewBox="0 0 12.5 11"><path d="M0,1 H12.5 M0,4 H12.5 M0,7 H12.5 M0,10 H12.5" stroke="#afb1b3" stroke-width="1.6"/></svg>
<svg style="left:931px;top:39.5px" width="12" height="11" viewBox="0 0 12 11"><path d="M0,1 H5 M0,4 H5 M0,7 H5 M0,10 H5" stroke="#afb1b3" stroke-width="1.6"/><rect x="6.6" y="0.2" width="5.2" height="10.6" fill="#afb1b3"/></svg>
<svg style="left:978.8px;top:39.6px" width="12.4" height="12" viewBox="0 0 12.4 12"><rect x="0" y="0" width="12.4" height="11.6" rx="1.2" fill="#afb1b3"/><path d="M1.6,9.6 L4.6,5.6 L6.8,8 L8.4,6.4 L10.8,9.6 Z" fill="#4e5254"/></svg>
<svg style="left:421.6px;top:66.3px" width="14" height="14" viewBox="0 0 14 14"><circle cx="5.6" cy="5.6" r="4.5" fill="none" stroke="#afb1b3" stroke-width="1.8"/><path d="M8.9,8.9 L13.2,13.2" stroke="#afb1b3" stroke-width="2.1"/></svg>
<svg style="left:448.5px;top:66.8px" width="13" height="13" viewBox="0 0 14.8 14.8"><path d="M5.90,2.95 L6.00,1.15 L8.80,1.15 L8.90,2.95 L10.51,3.87 L12.11,3.07 L13.51,5.49 L12.01,6.47 L12.01,8.33 L13.51,9.31 L12.11,11.73 L10.51,10.93 L8.90,11.85 L8.80,13.65 L6.00,13.65 L5.90,11.85 L4.29,10.93 L2.69,11.73 L1.29,9.31 L2.79,8.33 L2.79,6.47 L1.29,5.49 L2.69,3.07 L4.29,3.87 Z M5.05,7.4 a2.35,2.35 0 1 0 4.7,0 a2.35,2.35 0 1 0 -4.7,0 Z" fill="#afb1b3" fill-rule="evenodd" stroke="#afb1b3" stroke-width="0.5" stroke-linejoin="round"/></svg>
<div class="b" style="left:475px;top:72.3px;width:11px;height:2px;background:#afb1b3;"></div>
<svg style="left:448.4px;top:285.7px" width="13" height="13" viewBox="0 0 14.8 14.8"><path d="M5.90,2.95 L6.00,1.15 L8.80,1.15 L8.90,2.95 L10.51,3.87 L12.11,3.07 L13.51,5.49 L12.01,6.47 L12.01,8.33 L13.51,9.31 L12.11,11.73 L10.51,10.93 L8.90,11.85 L8.80,13.65 L6.00,13.65 L5.90,11.85 L4.29,10.93 L2.69,11.73 L1.29,9.31 L2.79,8.33 L2.79,6.47 L1.29,5.49 L2.69,3.07 L4.29,3.87 Z M5.05,7.4 a2.35,2.35 0 1 0 4.7,0 a2.35,2.35 0 1 0 -4.7,0 Z" fill="#afb1b3" fill-rule="evenodd" stroke="#afb1b3" stroke-width="0.5" stroke-linejoin="round"/></svg>
<div class="b" style="left:475px;top:291px;width:11px;height:2px;background:#afb1b3;"></div>
<svg style="left:319.6px;top:93.6px" width="14" height="10" viewBox="0 0 14 10"><rect width="14" height="10" rx="1.8" fill="#afb1b3"/></svg>
<svg style="left:319.6px;top:113.57px" width="14" height="10" viewBox="0 0 14 10"><rect width="14" height="10" rx="1.8" fill="#c3c5c7"/><path d="M2,8.2 L5,4.6 L7.4,7 L9,5.6 L12,8.2 Z" fill="#0d293e"/></svg>
<svg style="left:319.6px;top:132.04px" width="14" height="13" viewBox="0 0 14 13"><rect y="0" width="14" height="6" rx="3" fill="#afb1b3"/><rect y="7" width="14" height="6" rx="3" fill="#afb1b3"/><circle cx="3.2" cy="3" r="1.1" fill="#313335"/><circle cx="3.2" cy="10" r="1.1" fill="#313335"/></svg>
<svg style="left:319.6px;top:154.81px" width="14" height="7.4" viewBox="0 0 14 7.4"><rect width="14" height="7.4" rx="3.7" fill="#afb1b3"/><path d="M2.6,3.7 H6" stroke="#313335" stroke-width="1.3"/></svg>
<svg style="left:319.6px;top:172.98px" width="14" height="11" viewBox="0 0 14 11"><path d="M1,6 L4.8,9.6 L13,1.2" fill="none" stroke="#afb1b3" stroke-width="2"/></svg>
<svg style="left:319.90000000000003px;top:191.75px" width="13.4" height="13.4" viewBox="0 0 13.4 13.4"><circle cx="6.7" cy="6.7" r="5.7" fill="none" stroke="#afb1b3" stroke-width="1.8"/><circle cx="6.7" cy="6.7" r="2.8" fill="#afb1b3"/></svg>
<svg style="left:319.90000000000003px;top:211.72px" width="13.4" height="13.4" viewBox="0 0 13.4 13.4"><circle cx="6.7" cy="6.7" r="5.7" fill="none" stroke="#afb1b3" stroke-width="1.8"/><circle cx="6.7" cy="6.7" r="2.8" fill="#afb1b3"/></svg>
<svg style="left:319.6px;top:233.39px" width="14" height="10" viewBox="0 0 14 10"><rect x="0.7" y="0.7" width="12.6" height="8.6" fill="none" stroke="#afb1b3" stroke-width="1.4"/><path d="M2.6,2.6 L11.4,7.4 H2.6 Z" fill="#afb1b3"/></svg>
<svg style="left:319.6px;top:254.76000000000002px" width="14" height="7.2" viewBox="0 0 14 7.2"><rect x="0" y="1.4" width="5" height="4.4" rx="1" fill="#afb1b3"/><circle cx="9.8" cy="3.6" r="3.6" fill="#afb1b3"/></svg>
<svg style="left:197px;top:310.6px" width="14.4" height="13.4" viewBox="0 0 14.4 13.4"><rect x="0.6" y="0.6" width="13.2" height="12.2" fill="none" stroke="#9aa7b0" stroke-width="1.2"/><path d="M0.6,4.7 H13.8 M0.6,8.8 H13.8" stroke="#9aa7b0" stroke-width="1.2"/></svg>
<span class="t" style="left:215.6px;top:326.90000000000003px;font-size:10.6px;font-weight:bold;color:#c2c4c6;letter-spacing:-0.2px;">Ab</span>
<svg style="left:215.4px;top:350.90000000000003px" width="14" height="10" viewBox="0 0 14 10"><rect width="14" height="10" rx="1.8" fill="#c3c5c7"/><path d="M2,8.2 L5,4.6 L7.4,7 L9,5.6 L12,8.2 Z" fill="#0d293e"/></svg>
<svg style="left:198.5px;top:368.1px" width="10" height="10" viewBox="0 0 10 10"><path d="M1.2,3.2 L5,7 L8.8,3.2" fill="none" stroke="#afb1b3" stroke-width="1.5"/></svg>
<svg style="left:214.8px;top:368.5px" width="14.4" height="13.4" viewBox="0 0 14.4 13.4"><rect x="0.6" y="0.6" width="13.2" height="12.2" fill="none" stroke="#9aa7b0" stroke-width="1.2"/><path d="M5,0.6 V12.8 M9.4,0.6 V12.8" stroke="#9aa7b0" stroke-width="1.2"/></svg>
<span class="t" style="left:233.4px;top:384.8px;font-size:10.6px;font-weight:bold;color:#c2c4c6;letter-spacing:-0.2px;">Ab</span>
<span class="t" style="left:233.4px;top:404.1px;font-size:10.6px;font-weight:bold;color:#c2c4c6;letter-spacing:-0.2px;">Ab</span>
<svg style="left:198.5px;top:426.00000000000006px" width="10" height="10" viewBox="0 0 10 10"><path d="M1.2,3.2 L5,7 L8.8,3.2" fill="none" stroke="#afb1b3" stroke-width="1.5"/></svg>
<svg style="left:214.8px;top:426.40000000000003px" width="14.4" height="13.4" viewBox="0 0 14.4 13.4"><rect x="0.6" y="0.6" width="13.2" height="12.2" fill="none" stroke="#9aa7b0" stroke-width="1.2"/><path d="M5,0.6 V12.8 M9.4,0.6 V12.8" stroke="#9aa7b0" stroke-width="1.2"/></svg>
<span class="t" style="left:233.4px;top:441.1px;font-size:10.6px;font-weight:bold;color:#c2c4c6;letter-spacing:-0.2px;">Ab</span>
<div class="b" style="left:233.4px;top:457.00000000000006px;width:13.2px;height:1.2px;background:#c2c4c6;"></div>
<svg style="left:233.2px;top:466.8px" width="14" height="10" viewBox="0 0 14 10"><rect width="14" height="10" rx="1.8" fill="#afb1b3"/></svg>
<svg style="left:455.6px;top:329.40000000000003px" width="14" height="12.5" viewBox="0 0 14 12.5"><path d="M7,0.3 L13.8,12.2 H0.2 Z" fill="#f0a732"/><path d="M7,4.4 V8.4" stroke="#313335" stroke-width="1.7"/><circle cx="7" cy="10.3" r="0.95" fill="#313335"/></svg>
<svg style="left:455.6px;top:387.3px" width="14" height="12.5" viewBox="0 0 14 12.5"><path d="M7,0.3 L13.8,12.2 H0.2 Z" fill="#f0a732"/><path d="M7,4.4 V8.4" stroke="#313335" stroke-width="1.7"/><circle cx="7" cy="10.3" r="0.95" fill="#313335"/></svg>
<svg style="left:455.6px;top:406.6px" width="14" height="12.5" viewBox="0 0 14 12.5"><path d="M7,0.3 L13.8,12.2 H0.2 Z" fill="#f0a732"/><path d="M7,4.4 V8.4" stroke="#313335" stroke-width="1.7"/><circle cx="7" cy="10.3" r="0.95" fill="#313335"/></svg>
<svg style="left:455.6px;top:445.20000000000005px" width="14" height="12.5" viewBox="0 0 14 12.5"><path d="M7,0.3 L13.8,12.2 H0.2 Z" fill="#f0a732"/><path d="M7,4.4 V8.4" stroke="#313335" stroke-width="1.7"/><circle cx="7" cy="10.3" r="0.95" fill="#313335"/></svg>
<svg style="left:455.6px;top:464.5px" width="14" height="12.5" viewBox="0 0 14 12.5"><path d="M7,0.3 L13.8,12.2 H0.2 Z" fill="#f0a732"/><path d="M7,4.4 V8.4" stroke="#313335" stroke-width="1.7"/><circle cx="7" cy="10.3" r="0.95" fill="#313335"/></svg>
<svg style="left:456.70000000000005px;top:348.70000000000005px" width="11.8" height="11.8" viewBox="0 0 11.8 11.8"><circle cx="5.9" cy="5.9" r="5.9" fill="#c75450"/><path d="M5.9,2.478 V7.08" stroke="#3c3f41" stroke-width="1.77"/><circle cx="5.9" cy="9.145000000000001" r="1.0030000000000001" fill="#3c3f41"/></svg>
<svg style="left:500.6px;top:65px" width="15" height="16" viewBox="0 0 15 16"><path d="M7.5,0 L15,5.5 L7.5,11 L0,5.5 Z" fill="#3a98cc"/><path d="M1.3,8.7 L7.5,13.2 L13.7,8.7 L15,9.7 L7.5,15.2 L0,9.7 Z" fill="#3a98cc"/></svg>
<svg style="left:513.3px;top:79px" width="5.4" height="3" viewBox="0 0 5.4 3"><path d="M0,0 H5.4 L2.7,2.9 Z" fill="#d4d4d4"/></svg>
<svg style="left:529px;top:65px" width="16" height="16" viewBox="0 0 16 16"><g fill="none" stroke="#afb1b3" stroke-width="1.1"><rect x="4.2" y="2" width="7.6" height="12" rx="1" transform="rotate(-35 8 8)"/><path d="M9.6,0.9 A7.3,7.3 0 0 1 15.2,6.6 M6.4,15.1 A7.3,7.3 0 0 1 0.8,9.4"/></g></svg>
<svg style="left:542.5px;top:79px" width="5.4" height="3" viewBox="0 0 5.4 3"><path d="M0,0 H5.4 L2.7,2.9 Z" fill="#d4d4d4"/></svg>
<svg style="left:559.6px;top:66.2px" width="13" height="13" viewBox="0 0 13 13"><circle cx="6.5" cy="6.5" r="5.9" fill="none" stroke="#9aa7b0" stroke-width="1.1"/><circle cx="5.5" cy="5.5" r="4.8" fill="#9aa7b0"/></svg>
<svg style="left:571.7px;top:79px" width="5.4" height="3" viewBox="0 0 5.4 3"><path d="M0,0 H5.4 L2.7,2.9 Z" fill="#d4d4d4"/></svg>
<svg style="left:593.2px;top:67px" width="7.8" height="11.8" viewBox="0 0 7.8 11.8"><rect width="7.8" height="11.8" rx="1.2" fill="#afb1b3"/><rect x="1.2" y="1.6" width="5.4" height="7.6" fill="#3c3f41"/><rect x="2.8" y="10" width="2.2" height="0.9" fill="#3c3f41"/></svg>
<svg style="left:655.4px;top:71.0px" width="8" height="5.2" viewBox="0 0 8 5.2"><path d="M0.6,0.6 L4,4.2 L7.4,0.6" fill="none" stroke="#9da0a3" stroke-width="1.3"/></svg>
<svg style="left:671.8px;top:69.0px" width="12.4" height="7.233333333333333" viewBox="0 4.5 24 14"><path d="M17.6,9.48 l1.84,-3.18 c0.16,-0.31 0.04,-0.69 -0.26,-0.85 c-0.29,-0.15 -0.65,-0.06 -0.83,0.22 l-1.88,3.24 a11.46,11.46 0 0 0 -8.94,0 L5.65,5.67 c-0.19,-0.29 -0.58,-0.38 -0.87,-0.2 c-0.28,0.18 -0.37,0.54 -0.22,0.83 L6.4,9.48 A10.78,10.78 0 0 0 1,18 h22 A10.78,10.78 0 0 0 17.6,9.48 Z M7,15.25 a1.25,1.25 0 1 1 0,-2.5 a1.25,1.25 0 0 1 0,2.5 Z m10,0 a1.25,1.25 0 1 1 0,-2.5 a1.25,1.25 0 0 1 0,2.5 Z" fill="#3ddc84"/></svg>
<svg style="left:706px;top:71.0px" width="8" height="5.2" viewBox="0 0 8 5.2"><path d="M0.6,0.6 L4,4.2 L7.4,0.6" fill="none" stroke="#9da0a3" stroke-width="1.3"/></svg>
<svg style="left:747.8px;top:66px" width="14" height="14" viewBox="0 0 14 14"><circle cx="7" cy="7" r="7" fill="#c75450"/><path d="M7,2.94 V8.4" stroke="#3c3f41" stroke-width="2.1"/><circle cx="7" cy="10.85" r="1.1900000000000002" fill="#3c3f41"/></svg>
<div class="b" style="left:551px;top:64px;width:1px;height:18px;background:#505355;"></div>
<svg style="left:500.6px;top:95.8px" width="15" height="10.6" viewBox="0 0 15 10.6"><path d="M0,5.3 C2,1.6 4.6,0 7.5,0 C10.4,0 13,1.6 15,5.3 C13,9 10.4,10.6 7.5,10.6 C4.6,10.6 2,9 0,5.3 Z" fill="#afb1b3"/><circle cx="7.5" cy="5.3" r="3.2" fill="#3c3f41"/><circle cx="7.5" cy="5.3" r="1.7" fill="#afb1b3"/></svg>
<svg style="left:513.3px;top:107.8px" width="5.4" height="3" viewBox="0 0 5.4 3"><path d="M0,0 H5.4 L2.7,2.9 Z" fill="#d4d4d4"/></svg>
<svg style="left:524.8px;top:94px" width="14.4" height="13.8" viewBox="0 0 14.4 13.8"><rect x="0.6" y="0.6" width="13.2" height="12.6" fill="none" stroke="#9aa7b0" stroke-width="1.2"/><path d="M5,0.6 V13.2 M9.4,0.6 V13.2" stroke="#9aa7b0" stroke-width="1.2"/></svg>
<svg style="left:550px;top:94px" width="16" height="15" viewBox="0 0 16 15"><g fill="none" stroke="#afb1b3" stroke-width="1.1"><path d="M2,1 L13,12.4"/><path d="M10.2,1.4 V8.2"/><circle cx="12" cy="6.4" r="1.9"/><path d="M3.6,8.2 C2.4,6.4 3.4,4.4 5,4.6 C6.6,4.8 6.8,7 6.2,8.4"/><path d="M0.4,10.6 H15.6" stroke-dasharray="1.6 1.2"/></g><path d="M5,14.6 L8,11.8 L11,14.6 Z" fill="#afb1b3"/></svg>
<svg style="left:577px;top:94px" width="16" height="14.4" viewBox="0 0 16 14.4"><path d="M0.8,0 V14" stroke="#afb1b3" stroke-width="1.4"/><rect x="5.2" y="2.8" width="4.2" height="7.2" fill="#afb1b3"/><path d="M13.4,0 V9" stroke="#afb1b3" stroke-width="1" stroke-dasharray="2.4 1.2"/><path d="M9.6,9.2 L14.2,13.8 M14.2,9.2 L9.6,13.8" stroke="#db5860" stroke-width="1.4"/></svg>
<svg style="left:610.6px;top:94px" width="15" height="14.4" viewBox="0 0 15 14.4"><path d="M7.5,0 V14.4" stroke="#afb1b3" stroke-width="1.5"/><path d="M0,7.2 H3.4 M11.6,7.2 H15" stroke="#afb1b3" stroke-width="1.3"/><path d="M3,4.6 L5.8,7.2 L3,9.8 Z M12,4.6 L9.2,7.2 L12,9.8 Z" fill="#afb1b3"/></svg>
<svg style="left:639.4px;top:94.2px" width="9" height="14.2" viewBox="0 0 9 14.2"><path d="M4.5,2 V12.2" stroke="#afb1b3" stroke-width="1.6"/><path d="M4.5,0 L8.4,4.2 H0.6 Z M4.5,14.2 L8.4,10 H0.6 Z" fill="#afb1b3"/></svg>
<svg style="left:748.5px;top:95.2px" width="12.6" height="12.6" viewBox="0 0 12.6 12.6"><circle cx="6.3" cy="6.3" r="6.3" fill="#3895c9"/></svg>
<span class="t" style="left:751.6px;top:91.7px;font-size:10.5px;font-weight:bold;color:#2b3b45;">?</span>
<svg style="left:734.5px;top:337.5px" width="13.5" height="14" viewBox="0 0 13.5 14"><path d="M3.2,13.6 L0.4,8.6 C0,7.8 1,7 1.8,7.8 L3,9.2 V2.4 C3,1.4 4.6,1.4 4.6,2.4 V6.4 H5 V1 C5,0 6.6,0 6.6,1 V6.4 H7 V1.4 C7,0.4 8.6,0.4 8.6,1.4 V6.6 H9 V2.8 C9,1.8 10.6,1.8 10.6,2.8 V10 C10.6,12.4 9.4,13.6 7.6,13.6 Z" fill="#c9cbcd"/></svg>
<svg style="left:735.6px;top:372px" width="11" height="11" viewBox="0 0 11 11"><path d="M5.5,0 V11 M0,5.5 H11" stroke="#c9cbcd" stroke-width="1.7"/></svg>
<div class="b" style="left:735.8px;top:403.2px;width:10.6px;height:1.7px;background:#c9cbcd;"></div>
<svg style="left:734.3px;top:450px" width="14" height="12" viewBox="0 0 14 12"><rect x="0.8" y="0.8" width="12.4" height="10.4" fill="none" stroke="#c9cbcd" stroke-width="1.5"/><path d="M3.4,5.2 V3.4 H5.4 M8.6,8.6 H10.6 V6.8" fill="none" stroke="#c9cbcd" stroke-width="1.1"/></svg>
<svg style="left:966.8px;top:66.3px" width="14" height="14" viewBox="0 0 14 14"><circle cx="5.6" cy="5.6" r="4.5" fill="none" stroke="#afb1b3" stroke-width="1.8"/><path d="M8.9,8.9 L13.2,13.2" stroke="#afb1b3" stroke-width="2.1"/></svg>
<svg style="left:993.8px;top:66.8px" width="13" height="13" viewBox="0 0 14.8 14.8"><path d="M5.90,2.95 L6.00,1.15 L8.80,1.15 L8.90,2.95 L10.51,3.87 L12.11,3.07 L13.51,5.49 L12.01,6.47 L12.01,8.33 L13.51,9.31 L12.11,11.73 L10.51,10.93 L8.90,11.85 L8.80,13.65 L6.00,13.65 L5.90,11.85 L4.29,10.93 L2.69,11.73 L1.29,9.31 L2.79,8.33 L2.79,6.47 L1.29,5.49 L2.69,3.07 L4.29,3.87 Z M5.05,7.4 a2.35,2.35 0 1 0 4.7,0 a2.35,2.35 0 1 0 -4.7,0 Z" fill="#afb1b3" fill-rule="evenodd" stroke="#afb1b3" stroke-width="0.5" stroke-linejoin="round"/></svg>
<div class="b" style="left:1019px;top:72.3px;width:11px;height:2px;background:#afb1b3;"></div>
<svg style="left:775.3px;top:95.4px" width="13.4" height="10" viewBox="0 0 13.4 10"><rect width="13.4" height="10" rx="1.8" fill="#afb1b3"/><path d="M2,8.2 L5,4.6 L7.2,7 L8.8,5.6 L11.6,8.2 Z" fill="#3c3f41"/></svg>
<svg style="left:777.2px;top:151.4px" width="10" height="10" viewBox="0 0 10 10"><path d="M1.2,3.2 L5,7 L8.8,3.2" fill="none" stroke="#aeb0b2" stroke-width="1.5"/></svg>
<svg style="left:777.2px;top:299.8px" width="10" height="10" viewBox="0 0 10 10"><path d="M1.2,3.2 L5,7 L8.8,3.2" fill="none" stroke="#aeb0b2" stroke-width="1.5"/></svg>
<svg style="left:777.2px;top:467.3px" width="10" height="10" viewBox="0 0 10 10"><path d="M1.2,3.2 L5,7 L8.8,3.2" fill="none" stroke="#aeb0b2" stroke-width="1.5"/></svg>
<svg style="left:986.7px;top:148px" width="10" height="10" viewBox="0 0 10 10"><path d="M5,0 V10 M0,5 H10" stroke="#c8cacc" stroke-width="1.6"/></svg>
<div class="b" style="left:1008px;top:152.2px;width:11px;height:1.7px;background:#c8cacc;"></div>
<div class="b" style="left:986.5px;top:173.2px;width:21.3px;height:15.6px;background:#3e4143;"></div>
<div class="b" style="left:986.5px;top:173.2px;width:1px;height:15.6px;background:#5e6062;"></div>
<svg style="left:993.3px;top:179.2px" width="8" height="4.6" viewBox="0 0 8 4.6"><path d="M0,0 H8 L4,4.4 Z" fill="#a9abad"/></svg>
<svg style="left:1014px;top:174.0px" width="6" height="14.4" viewBox="0 0 6 14.4"><rect x="0.5" y="0.5" width="4.8" height="13.4" rx="2" fill="none" stroke="#606365" stroke-width="1"/></svg>
<div class="b" style="left:986.5px;top:196.95px;width:21.3px;height:15.6px;background:#3e4143;"></div>
<div class="b" style="left:986.5px;top:196.95px;width:1px;height:15.6px;background:#5e6062;"></div>
<svg style="left:993.3px;top:202.95px" width="8" height="4.6" viewBox="0 0 8 4.6"><path d="M0,0 H8 L4,4.4 Z" fill="#a9abad"/></svg>
<svg style="left:1014px;top:197.75px" width="6" height="14.4" viewBox="0 0 6 14.4"><rect x="0.5" y="0.5" width="4.8" height="13.4" rx="2" fill="none" stroke="#606365" stroke-width="1"/></svg>
<svg style="left:1014px;top:245.3px" width="6" height="14.4" viewBox="0 0 6 14.4"><rect x="0.5" y="0.5" width="4.8" height="13.4" rx="2" fill="none" stroke="#606365" stroke-width="1"/></svg>
<svg style="left:1014px;top:269px" width="6" height="14.4" viewBox="0 0 6 14.4"><rect x="0.5" y="0.5" width="4.8" height="13.4" rx="2" fill="#afb1b3" stroke="#afb1b3" stroke-width="1"/></svg>
<svg style="left:993.6px;top:333.45000000000005px" width="8" height="4.6" viewBox="0 0 8 4.6"><path d="M0,0 H8 L4,4.4 Z" fill="#a9abad"/></svg>
<svg style="left:993.6px;top:361.55px" width="8" height="4.6" viewBox="0 0 8 4.6"><path d="M0,0 H8 L4,4.4 Z" fill="#a9abad"/></svg>
<svg style="left:993.6px;top:412.55px" width="8" height="4.6" viewBox="0 0 8 4.6"><path d="M0,0 H8 L4,4.4 Z" fill="#a9abad"/></svg>
<svg style="left:993.6px;top:440.45000000000005px" width="8" height="4.6" viewBox="0 0 8 4.6"><path d="M0,0 H8 L4,4.4 Z" fill="#a9abad"/></svg>
<svg style="left:1014px;top:327.2px" width="6" height="16.6" viewBox="0 0 6 16.6"><rect x="0.5" y="0.5" width="4.8" height="15.600000000000001" rx="2" fill="none" stroke="#606365" stroke-width="1"/></svg>
<svg style="left:1014px;top:354.6px" width="6" height="16.6" viewBox="0 0 6 16.6"><rect x="0.5" y="0.5" width="4.8" height="15.600000000000001" rx="2" fill="none" stroke="#606365" stroke-width="1"/></svg>
<svg style="left:1014px;top:380px" width="6" height="16.6" viewBox="0 0 6 16.6"><rect x="0.5" y="0.5" width="4.8" height="15.600000000000001" rx="2" fill="none" stroke="#606365" stroke-width="1"/></svg>
<svg style="left:778px;top:437.5px" width="10" height="10" viewBox="0 0 10 10"><path d="M9.6,2.4 L7.8,4.2 L5.8,2.2 L7.6,0.4 C6.2,-0.2 4.6,0.2 3.8,1.4 C3.2,2.4 3.2,3.4 3.6,4.4 L0.4,7.6 C-0.2,8.2 -0.2,9 0.4,9.6 C1,10.2 1.8,10.2 2.4,9.6 L5.6,6.4 C6.6,6.8 7.8,6.6 8.6,6 C9.8,5.2 10.2,3.8 9.6,2.4 Z" fill="#afb1b3"/></svg>
<svg style="left:607px;top:235px" width="52" height="73" viewBox="0 0 52 73"><g fill="none" stroke="#050505"><path stroke-width="3.1" d="M16.9,55 L16.9,52.5 C16.9,48 12.4,46.4 8.8,42.2 A23.5,23.5 0 1 1 42.4,42.2 C38.8,46.4 35.5,48 35.5,52.5 L35.5,55"/><path stroke-width="2.9" d="M17.2,17.2 L34.4,34.4 M34.4,17.2 L17.2,34.4" stroke-linecap="round"/></g><path d="M15.4,53.4 H37 V65 C37,68 35,69.4 33,69.4 H31.5 C30.6,71.2 28.4,71.6 26.2,71.6 C24,71.6 21.8,71.2 20.9,69.4 H19.4 C17.4,69.4 15.4,68 15.4,65 Z" fill="#050505"/><path d="M19.2,62.4 H22.2 M24.3,62.4 H33" stroke="#ffffff" stroke-width="2.3"/></svg>
<svg style="left:882.9px;top:268.7px" width="9.36" height="13.14" viewBox="0 0 52 73"><g fill="none" stroke="#050505"><path stroke-width="3.2" d="M16.9,55 L16.9,52.5 C16.9,48 12.4,46.4 8.8,42.2 A23.5,23.5 0 1 1 42.4,42.2 C38.8,46.4 35.5,48 35.5,52.5 L35.5,55"/><path stroke-width="3" d="M17.2,17.2 L34.4,34.4 M34.4,17.2 L17.2,34.4" stroke-linecap="round"/></g><path d="M15.4,53.4 H37 V65 C37,68 35,69.4 33,69.4 H31.5 C30.6,71.2 28.4,71.6 26.2,71.6 C24,71.6 21.8,71.2 20.9,69.4 H19.4 C17.4,69.4 15.4,68 15.4,65 Z" fill="#050505"/><path d="M19.2,62.4 H22.2 M24.3,62.4 H33" stroke="#ffffff" stroke-width="2.3"/></svg>
</body></html>
